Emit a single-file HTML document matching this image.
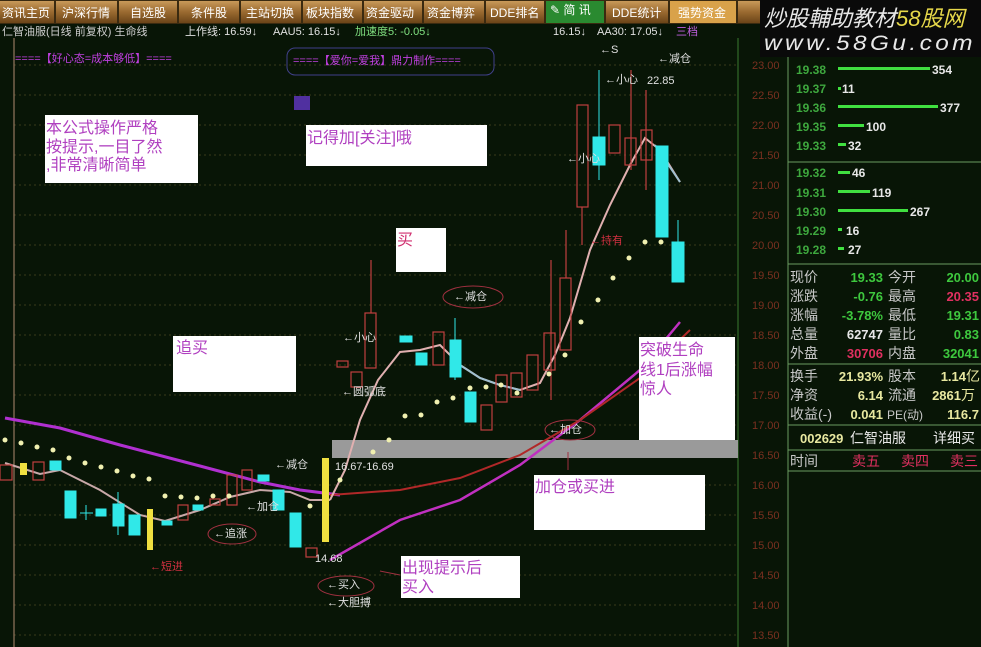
<!DOCTYPE html>
<html><head><meta charset="utf-8"><style>
body{margin:0;width:981px;height:647px;overflow:hidden;background:#071405;font-family:"Liberation Sans","Noto Sans CJK SC",sans-serif}
svg{display:block}
</style></head><body>
<svg width="981" height="647" xmlns="http://www.w3.org/2000/svg" font-family="Liberation Sans, Noto Sans CJK SC, sans-serif">
<defs><linearGradient id="btn" x1="0" y1="0" x2="0" y2="1"><stop offset="0" stop-color="#c99a5a"/><stop offset="0.5" stop-color="#9a6a30"/><stop offset="1" stop-color="#6b4418"/></linearGradient></defs>
<rect width="981" height="647" fill="#081506"/>
<rect x="0" y="0" width="760" height="24" fill="#3a2a10"/>
<g font-size="12" fill="#fff">
<rect x="0" y="1" width="54" height="22" fill="url(#btn)"/><text x="2" y="17">资讯主页</text>
<rect x="56" y="1" width="61" height="22" fill="url(#btn)"/><text x="62" y="17">沪深行情</text>
<rect x="119" y="1" width="58" height="22" fill="url(#btn)"/><text x="130" y="17">自选股</text>
<rect x="179" y="1" width="60" height="22" fill="url(#btn)"/><text x="191" y="17">条件股</text>
<rect x="241" y="1" width="60" height="22" fill="url(#btn)"/><text x="246" y="17">主站切换</text>
<rect x="303" y="1" width="59" height="22" fill="url(#btn)"/><text x="306" y="17">板块指数</text>
<rect x="364" y="1" width="58" height="22" fill="url(#btn)"/><text x="366" y="17">资金驱动</text>
<rect x="424" y="1" width="60" height="22" fill="url(#btn)"/><text x="427" y="17">资金博弈</text>
<rect x="486" y="1" width="58" height="22" fill="url(#btn)"/><text x="490" y="17">DDE排名</text>
<rect x="546" y="1" width="58" height="22" fill="#2a8a30"/><text x="550" y="14">✎ 简 讯</text>
<rect x="606" y="1" width="62" height="22" fill="url(#btn)"/><text x="612" y="17">DDE统计</text>
<rect x="670" y="1" width="66" height="22" fill="#d9a24a"/><text x="678" y="17">强势资金</text>
<rect x="738" y="1" width="22" height="22" fill="url(#btn)"/>
</g>
<rect x="760" y="0" width="221" height="57" fill="#0a0a0a"/>
<text x="764" y="26" font-size="22" font-style="italic" fill="#e8e8e8">炒股輔助教材</text>
<text x="896" y="26" font-size="22" font-style="italic" fill="#e6d84a">58股网</text>
<text x="764" y="50" font-size="21" font-style="italic" fill="#e8e8e8" letter-spacing="3" textLength="212" lengthAdjust="spacingAndGlyphs">www.58Gu.com</text>
<rect x="0" y="24" width="760" height="14" fill="#081506"/>
<g font-size="11">
<text x="2" y="35" fill="#cfcfcf">仁智油服(日线 前复权) 生命线</text>
<text x="185" y="35" fill="#e0e0e0">上作线: 16.59↓</text>
<text x="273" y="35" fill="#e0e0e0">AAU5: 16.15↓</text>
<text x="355" y="35" fill="#80e080">加速度5: -0.05↓</text>
<text x="553" y="35" fill="#e0e0e0">16.15↓</text>
<text x="597" y="35" fill="#e0e0e0">AA30: 17.05↓</text>
<text x="676" y="35" fill="#c060e0">三档</text>
</g>
<g stroke="#3a3a1a" stroke-dasharray="2,3" stroke-width="1">
<line x1="14" y1="65" x2="738" y2="65"/><line x1="14" y1="95" x2="738" y2="95"/><line x1="14" y1="125" x2="738" y2="125"/><line x1="14" y1="155" x2="738" y2="155"/><line x1="14" y1="185" x2="738" y2="185"/><line x1="14" y1="215" x2="738" y2="215"/><line x1="14" y1="245" x2="738" y2="245"/><line x1="14" y1="275" x2="738" y2="275"/><line x1="14" y1="305" x2="738" y2="305"/><line x1="14" y1="335" x2="738" y2="335"/><line x1="14" y1="365" x2="738" y2="365"/><line x1="14" y1="395" x2="738" y2="395"/><line x1="14" y1="425" x2="738" y2="425"/><line x1="14" y1="485" x2="738" y2="485"/><line x1="14" y1="515" x2="738" y2="515"/><line x1="14" y1="545" x2="738" y2="545"/><line x1="14" y1="575" x2="738" y2="575"/><line x1="14" y1="605" x2="738" y2="605"/><line x1="14" y1="635" x2="738" y2="635"/>
</g>
<line x1="14" y1="38" x2="14" y2="647" stroke="#b08a70" stroke-width="1"/>
<line x1="738" y1="38" x2="738" y2="647" stroke="#3a7a30"/>
<line x1="788" y1="57" x2="788" y2="647" stroke="#6a9a60"/>
<g font-size="11" fill="#7a3020">
<text x="752" y="69">23.00</text><text x="752" y="99">22.50</text><text x="752" y="129">22.00</text><text x="752" y="159">21.50</text><text x="752" y="189">21.00</text><text x="752" y="219">20.50</text><text x="752" y="249">20.00</text><text x="752" y="279">19.50</text><text x="752" y="309">19.00</text><text x="752" y="339">18.50</text><text x="752" y="369">18.00</text><text x="752" y="399">17.50</text><text x="752" y="429">17.00</text><text x="752" y="459">16.50</text><text x="752" y="489">16.00</text><text x="752" y="519">15.50</text><text x="752" y="549">15.00</text><text x="752" y="579">14.50</text><text x="752" y="609">14.00</text><text x="752" y="639">13.50</text>
</g>
<text x="15" y="62" font-size="11" fill="#c040e0">====【好心态=成本够低】====</text>
<rect x="287" y="48" width="207" height="27" rx="8" fill="none" stroke="#40408a"/>
<text x="293" y="64" font-size="11" fill="#c040e0">====【爱你=爱我】鼎力制作====</text>
<rect x="294" y="96" width="16" height="14" fill="#5030a0"/>
<rect x="332" y="440" width="406" height="18" fill="#9a9a9a"/>
<polyline points="5,418 60,428 120,445 200,466 260,482 300,490 340,495" fill="none" stroke="#b030d0" stroke-width="3"/>
<polyline points="330,560 400,520 460,500 520,465 580,420 640,370 680,322" fill="none" stroke="#c030c0" stroke-width="2.5"/>
<polyline points="330,495 400,490 460,478 520,455 580,420 640,378 690,330" fill="none" stroke="#b02828" stroke-width="2"/>
<polyline points="5,463 40,474 60,470 100,490 140,515 165,521 200,510 230,497 260,490 290,492 310,500 330,500" fill="none" stroke="#c8a8a8" stroke-width="2"/>
<polyline points="330,500 345,470 360,420 378,380 400,352 420,350 440,345 460,365 480,378 500,385 520,390 540,383 555,355 570,318 590,250 610,205 630,165 645,138 660,150 680,182" fill="none" stroke="#e0b0b0" stroke-width="2"/>
<polyline points="460,365 480,378 500,385 520,390" fill="none" stroke="#a0c0d0" stroke-width="2"/>
<polyline points="655,145 680,182" fill="none" stroke="#a0c0d0" stroke-width="2"/>
<g fill="none" stroke="#c04040" stroke-width="1.2">
<rect x="0" y="465" width="12" height="15"/><rect x="33" y="462" width="11" height="18"/><rect x="178" y="505" width="10" height="15"/><rect x="210" y="499" width="10" height="6"/><rect x="227" y="475" width="10" height="30"/><rect x="242" y="470" width="10" height="20"/><rect x="306" y="548" width="11" height="9"/>
<rect x="337" y="361" width="11" height="6"/><rect x="351" y="372" width="11" height="15"/><rect x="365" y="313" width="11" height="55"/><rect x="433" y="332" width="11" height="33"/><rect x="481" y="405" width="11" height="25"/><rect x="496" y="375" width="11" height="27"/><rect x="511" y="373" width="11" height="24"/><rect x="527" y="355" width="11" height="35"/><rect x="544" y="333" width="11" height="37"/><rect x="560" y="278" width="11" height="72"/><rect x="577" y="105" width="11" height="102"/><rect x="609" y="125" width="11" height="28"/><rect x="625" y="138" width="11" height="27"/><rect x="641" y="130" width="11" height="30"/>
<line x1="371" y1="260" x2="371" y2="313"/><line x1="582" y1="207" x2="582" y2="245"/><line x1="631" y1="70" x2="631" y2="170"/><line x1="646" y1="90" x2="646" y2="190"/><line x1="566" y1="230" x2="566" y2="278"/><line x1="551" y1="260" x2="551" y2="400"/>
</g>
<g fill="#30e8e8" stroke="#30e8e8">
<rect x="50" y="461" width="11" height="9"/><rect x="65" y="491" width="11" height="27"/><rect x="96" y="509" width="10" height="7"/><rect x="113" y="504" width="11" height="22"/><rect x="129" y="515" width="11" height="20"/><rect x="162" y="521" width="10" height="4"/><rect x="193" y="505" width="10" height="5"/><rect x="258" y="475" width="11" height="6"/><rect x="273" y="490" width="11" height="20"/><rect x="290" y="513" width="11" height="34"/>
<rect x="400" y="336" width="12" height="6"/><rect x="416" y="353" width="11" height="12"/><rect x="450" y="340" width="11" height="37"/><rect x="465" y="392" width="11" height="30"/><rect x="593" y="137" width="12" height="28"/><rect x="656" y="146" width="12" height="91"/><rect x="672" y="242" width="12" height="40"/>
<line x1="86" y1="505" x2="86" y2="520"/><line x1="80" y1="513" x2="93" y2="513"/><line x1="118" y1="492" x2="118" y2="535"/><line x1="599" y1="70" x2="599" y2="180"/><line x1="678" y1="220" x2="678" y2="242"/><line x1="455" y1="318" x2="455" y2="380"/>
</g>
<g fill="#f0e040"><rect x="20" y="463" width="7" height="12"/><rect x="147" y="509" width="6" height="41"/><rect x="322" y="458" width="7" height="84"/></g>
<g fill="#f0f0b0">
<circle cx="5" cy="440" r="2.5"/><circle cx="21" cy="443" r="2.5"/><circle cx="37" cy="447" r="2.5"/><circle cx="53" cy="450" r="2.5"/><circle cx="69" cy="458" r="2.5"/><circle cx="85" cy="463" r="2.5"/><circle cx="101" cy="467" r="2.5"/><circle cx="117" cy="471" r="2.5"/><circle cx="133" cy="476" r="2.5"/><circle cx="149" cy="479" r="2.5"/><circle cx="165" cy="496" r="2.5"/><circle cx="181" cy="497" r="2.5"/><circle cx="197" cy="498" r="2.5"/><circle cx="213" cy="496" r="2.5"/><circle cx="229" cy="496" r="2.5"/><circle cx="310" cy="506" r="2.5"/><circle cx="340" cy="480" r="2.5"/><circle cx="373" cy="452" r="2.5"/><circle cx="389" cy="440" r="2.5"/><circle cx="405" cy="416" r="2.5"/><circle cx="421" cy="415" r="2.5"/><circle cx="437" cy="402" r="2.5"/><circle cx="453" cy="398" r="2.5"/><circle cx="470" cy="388" r="2.5"/><circle cx="486" cy="387" r="2.5"/><circle cx="501" cy="385" r="2.5"/><circle cx="517" cy="393" r="2.5"/><circle cx="549" cy="374" r="2.5"/><circle cx="565" cy="355" r="2.5"/><circle cx="581" cy="322" r="2.5"/><circle cx="598" cy="300" r="2.5"/><circle cx="613" cy="278" r="2.5"/><circle cx="629" cy="258" r="2.5"/><circle cx="645" cy="242" r="2.5"/><circle cx="661" cy="242" r="2.5"/>
</g>
<g fill="#fff">
<rect x="45" y="115" width="153" height="68"/><rect x="306" y="125" width="181" height="41"/><rect x="396" y="228" width="50" height="44"/><rect x="173" y="336" width="123" height="56"/><rect x="534" y="475" width="171" height="55"/><rect x="639" y="337" width="96" height="103"/><rect x="401" y="556" width="119" height="42"/>
</g>
<g font-size="16" fill="#b040c0">
<text x="46" y="133">本公式操作严格</text><text x="46" y="152">按提示,一目了然</text><text x="46" y="170">,非常清晰简单</text>
<text x="307" y="143">记得加[关注]哦</text>
<text x="397" y="245" fill="#d03070">买</text>
<text x="176" y="353">追买</text>
<text x="535" y="492">加仓或买进</text>
<text x="640" y="355">突破生命</text><text x="640" y="375">线1后涨幅</text><text x="640" y="394">惊人</text>
<text x="402" y="573">出现提示后</text><text x="402" y="592">买入</text>
</g>
<g font-size="11" fill="#e0e0e0">
<text x="275" y="468">←减仓</text><text x="246" y="510">←加仓</text><text x="214" y="537">←追涨</text>
<text x="315" y="562">14.68</text><text x="335" y="470">16.67-16.69</text>
<text x="327" y="588">←买入</text><text x="327" y="606">←大胆搏</text>
<text x="342" y="395">←圆弧底</text><text x="343" y="341">←小心</text>
<text x="454" y="300">←减仓</text><text x="549" y="433">←加仓</text>
<text x="567" y="162">←小心</text><text x="605" y="83">←小心</text><text x="647" y="84">22.85</text>
<text x="658" y="62">←减仓</text><text x="600" y="53">←S</text>
</g>
<text x="150" y="570" font-size="11" fill="#d03040">←短进</text>
<text x="590" y="244" font-size="11" fill="#d03040">←持有</text>
<g fill="none" stroke="#a03040">
<ellipse cx="232" cy="534" rx="24" ry="10"/><ellipse cx="346" cy="586" rx="28" ry="10"/><ellipse cx="473" cy="297" rx="30" ry="11"/><ellipse cx="570" cy="430" rx="25" ry="10"/>
<path d="M380,571 L400,575"/><path d="M568,452 L568,470"/>
</g>
<g font-size="12" font-weight="bold">
<g fill="#3ea83e"><text x="796" y="74">19.38</text><text x="796" y="93">19.37</text><text x="796" y="112">19.36</text><text x="796" y="131">19.35</text><text x="796" y="150">19.33</text><text x="796" y="177">19.32</text><text x="796" y="197">19.31</text><text x="796" y="216">19.30</text><text x="796" y="235">19.29</text><text x="796" y="254">19.28</text></g>
<g fill="#40e040"><rect x="838" y="67" width="92" height="3"/><rect x="838" y="87" width="3" height="3"/><rect x="838" y="105" width="100" height="3"/><rect x="838" y="124" width="26" height="3"/><rect x="838" y="143" width="8" height="3"/><rect x="838" y="171" width="12" height="3"/><rect x="838" y="190" width="32" height="3"/><rect x="838" y="209" width="70" height="3"/><rect x="838" y="228" width="4" height="3"/><rect x="838" y="247" width="6" height="3"/></g>
<g fill="#e8e8e8"><text x="932" y="74">354</text><text x="842" y="93">11</text><text x="940" y="112">377</text><text x="866" y="131">100</text><text x="848" y="150">32</text><text x="852" y="177">46</text><text x="872" y="197">119</text><text x="910" y="216">267</text><text x="846" y="235">16</text><text x="848" y="254">27</text></g>
</g>
<line x1="788" y1="162" x2="981" y2="162" stroke="#6a9a60"/>
<line x1="788" y1="264" x2="981" y2="264" stroke="#6a9a60"/>
<g font-size="14" fill="#c8c8c8">
<text x="790" y="282">现价</text><text x="790" y="301">涨跌</text><text x="790" y="320">涨幅</text><text x="790" y="339">总量</text><text x="790" y="358">外盘</text>
<text x="888" y="282">今开</text><text x="888" y="301">最高</text><text x="888" y="320">最低</text><text x="888" y="339">量比</text><text x="888" y="358">内盘</text>
<text x="790" y="381">换手</text><text x="790" y="400">净资</text><text x="790" y="419">收益(-)</text>
<text x="888" y="381">股本</text><text x="888" y="400">流通</text><text x="887" y="419" font-size="12">PE(动)</text>
</g>
<g font-size="13" font-weight="bold" text-anchor="end">
<text x="883" y="282" fill="#3ec83e">19.33</text><text x="883" y="301" fill="#3ec83e">-0.76</text><text x="883" y="320" fill="#3ec83e">-3.78%</text><text x="883" y="339" fill="#e8e8e8">62747</text><text x="883" y="358" fill="#e03060">30706</text>
<text x="979" y="282" fill="#3ec83e">20.00</text><text x="979" y="301" fill="#e03060">20.35</text><text x="979" y="320" fill="#3ec83e">19.31</text><text x="979" y="339" fill="#3ec83e">0.83</text><text x="979" y="358" fill="#3ec83e">32041</text>
<g fill="#e8e8a0"><text x="883" y="381">21.93%</text><text x="883" y="400">6.14</text><text x="883" y="419">0.041</text><text x="966" y="381">1.14</text><text x="961" y="400">2861</text><text x="979" y="419">116.7</text></g>
</g>
<text x="966" y="381" font-size="14" fill="#e8e8a0">亿</text><text x="961" y="400" font-size="14" fill="#e8e8a0">万</text>
<line x1="788" y1="364" x2="981" y2="364" stroke="#6a9a60"/>
<line x1="788" y1="425" x2="981" y2="425" stroke="#6a9a60"/>
<line x1="788" y1="450" x2="981" y2="450" stroke="#6a9a60"/>
<text x="800" y="443" font-size="13" font-weight="bold" fill="#e8e8a0">002629</text>
<text x="850" y="443" font-size="14" fill="#e8e8e8">仁智油服</text>
<text x="933" y="443" font-size="14" fill="#e8e8e8">详细买</text>
<g font-size="14"><text x="790" y="466" fill="#c8c8c8">时间</text><text x="852" y="466" fill="#e03060">卖五</text><text x="901" y="466" fill="#e03060">卖四</text><text x="950" y="466" fill="#e03060">卖三</text></g>
<line x1="788" y1="471" x2="981" y2="471" stroke="#6a9a60"/>
</svg>
</body></html>
